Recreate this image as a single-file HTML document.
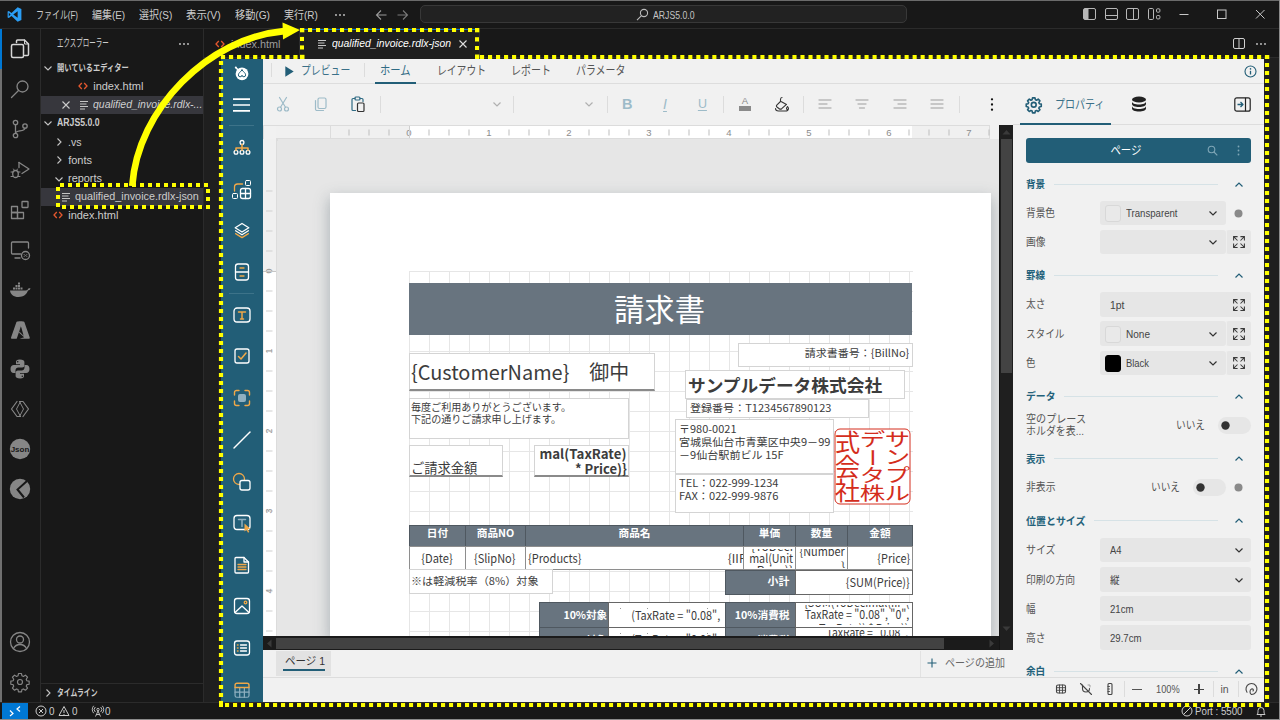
<!DOCTYPE html>
<html lang="ja"><head><meta charset="utf-8"><title>ARJS Designer in VS Code</title>
<style>
html,body{margin:0;padding:0;background:#181818;}
body{width:1280px;height:720px;overflow:hidden;position:relative;font-family:"Liberation Sans","Noto Sans CJK JP",sans-serif;}
#root{position:absolute;left:0;top:0;width:1280px;height:720px;overflow:hidden;}
#root div,#root svg,#root span.t{position:absolute;}
#root svg{overflow:visible;}
span.t{white-space:nowrap;line-height:1;transform-origin:0 50%;}
</style></head><body><div id="root">
<div style="left:0px;top:0px;width:1280px;height:720px;background:#181818;"></div>
<div style="left:0px;top:0px;width:1280px;height:1px;background:#6b6b6b;"></div>
<div style="left:0px;top:28px;width:1280px;height:1px;background:#2b2b2b;"></div>
<svg style="left:7px;top:7px" width="15" height="15" viewBox="0 0 100 100"><path d="M71 2 30 40 12 26 4 30v40l8 4 18-14 41 38 25-11V13zM71 28v44L42 50zM12 62V38l12 12z" fill="#2a9df4"/></svg>
<span class="t" style="top:9.70px;font-size:11px;color:#cccccc;left:36.20px;transform:scaleX(0.724);">ファイル(F)</span>
<span class="t" style="top:9.70px;font-size:11px;color:#cccccc;left:91.80px;transform:scaleX(0.905);">編集(E)</span>
<span class="t" style="top:9.70px;font-size:11px;color:#cccccc;left:139.20px;transform:scaleX(0.908);">選択(S)</span>
<span class="t" style="top:9.70px;font-size:11px;color:#cccccc;left:186.20px;transform:scaleX(0.944);">表示(V)</span>
<span class="t" style="top:9.70px;font-size:11px;color:#cccccc;left:234.50px;transform:scaleX(0.924);">移動(G)</span>
<span class="t" style="top:9.70px;font-size:11px;color:#cccccc;left:283.80px;transform:scaleX(0.904);">実行(R)</span>
<svg style="left:333px;top:12px" width="14" height="6" viewBox="0 0 14 6"><circle cx="3" cy="3" r="0.9" fill="#ccc"/><circle cx="7" cy="3" r="0.9" fill="#ccc"/><circle cx="11" cy="3" r="0.9" fill="#ccc"/></svg>
<svg style="left:375px;top:9px" width="34" height="12" viewBox="0 0 34 12" fill="none" stroke="#9a9a9a" stroke-width="1.1"><path d="M11.5 6H1.5M6 1.5 1.5 6 6 10.5"/><path d="M22.5 6h10M28 1.5 32.500 6 28 10.500" stroke="#7a7a7a"/></svg>
<div style="left:420px;top:5px;width:487px;height:18px;background:#222222;border:1px solid #383838;border-radius:5px;box-sizing:border-box;"></div>
<svg style="left:636px;top:8px" width="13" height="13" viewBox="0 0 13 13" fill="none" stroke="#bbb" stroke-width="1.1"><circle cx="8" cy="5" r="3.6"/><path d="M5.500 7.700 1 12.200"/></svg>
<span class="t" style="top:9.95px;font-size:10.5px;color:#c4c4c4;left:652.50px;transform:scaleX(0.827);">ARJS5.0.0</span>
<svg style="left:1083px;top:8px" width="13" height="12" viewBox="0 0 13 12" fill="none" stroke="#b8b8b8" stroke-width="1"><rect x="0.5" y="0.500" width="12" height="11" rx="1.5"/><rect x="1" y="1" width="4.500" height="10" fill="#b8b8b8" stroke="none"/></svg>
<svg style="left:1104.5px;top:8px" width="13" height="12" viewBox="0 0 13 12" fill="none" stroke="#b8b8b8" stroke-width="1"><rect x="0.5" y="0.500" width="12" height="11" rx="1.5"/><path d="M0.5 7.500h12"/></svg>
<svg style="left:1126px;top:8px" width="13" height="12" viewBox="0 0 13 12" fill="none" stroke="#b8b8b8" stroke-width="1"><rect x="0.5" y="0.500" width="12" height="11" rx="1.5"/><path d="M7.500 0.500v11"/></svg>
<svg style="left:1148px;top:8px" width="13" height="12" viewBox="0 0 13 12" fill="none" stroke="#b8b8b8" stroke-width="1"><rect x="0.5" y="0.500" width="5" height="11" rx="1.2"/><rect x="8.5" y="0.800" width="3.400" height="3.400" rx="1"/><rect x="8.5" y="7.500" width="3.400" height="3.400" rx="1"/></svg>
<svg style="left:1179px;top:8px" width="92" height="12" viewBox="0 0 92 12" fill="none" stroke="#c8c8c8" stroke-width="1"><path d="M0.500 6.500h9"/><rect x="38.500" y="2" width="8.500" height="8.500"/><path d="M77 2l8.500 8.500M85.500 2 77 10.500"/></svg>
<div style="left:40px;top:29px;width:1px;height:673px;background:#2b2b2b;"></div>
<div style="left:0px;top:29px;width:1.5px;height:673px;background:#707070;"></div>
<div style="left:0px;top:29px;width:2px;height:40px;background:#0078d4;"></div>
<svg style="left:8px;top:37px" width="24" height="24" viewBox="0 0 24 24" fill="none" stroke="#d7d7d7" stroke-width="1.5" stroke-linejoin="round" stroke-linecap="round"><path d="M8.500 5.500V4a1 1 0 0 1 1-1h7l4 4v10.500a1 1 0 0 1-1 1h-3"/><path d="M16.500 3v4h4" stroke-width="1"/><rect x="3.500" y="7.500" width="12" height="13" rx="1.500"/></svg>
<svg style="left:8px;top:77px" width="24" height="24" viewBox="0 0 24 24" fill="none" stroke="#868686" stroke-width="1.3" stroke-linejoin="round" stroke-linecap="round"><circle cx="14.500" cy="9.500" r="5.500"/><path d="M10.500 13.500 3.500 20.500"/></svg>
<svg style="left:8px;top:117px" width="24" height="24" viewBox="0 0 24 24" fill="none" stroke="#868686" stroke-width="1.3" stroke-linejoin="round" stroke-linecap="round"><circle cx="7.500" cy="5.500" r="2.200"/><circle cx="7.500" cy="18.500" r="2.200"/><circle cx="17" cy="9" r="2.200"/><path d="M7.500 7.700v8.600M17 11.200c0 3.500-9.500 2-9.500 5"/></svg>
<svg style="left:8px;top:157px" width="24" height="24" viewBox="0 0 24 24" fill="none" stroke="#868686" stroke-width="1.3" stroke-linejoin="round" stroke-linecap="round"><path d="M11 5.500 21 12l-7 4.500"/><path d="M11 5.500v5"/><ellipse cx="7.500" cy="17" rx="2.800" ry="3.500"/><path d="M3 15h2M10 15h2M3 19.500h2M10 19.500h2M5.500 12l1 1.500M9.500 12l-1 1.500" stroke-width="1"/></svg>
<svg style="left:8px;top:198px" width="24" height="24" viewBox="0 0 24 24" fill="none" stroke="#868686" stroke-width="1.3" stroke-linejoin="round" stroke-linecap="round"><rect x="3.500" y="8.500" width="6" height="6"/><rect x="3.500" y="14.500" width="6" height="6"/><rect x="9.500" y="14.500" width="6" height="6"/><rect x="14" y="3.500" width="6" height="6" rx="0.500"/></svg>
<svg style="left:8px;top:238px" width="24" height="24" viewBox="0 0 24 24" fill="none" stroke="#868686" stroke-width="1.3" stroke-linejoin="round" stroke-linecap="round"><path d="M20.500 10V5a1 1 0 0 0-1-1h-15a1 1 0 0 0-1 1v10a1 1 0 0 0 1 1h8"/><path d="M7 20h5"/><circle cx="17.500" cy="17.500" r="4"/><path d="M16 16.300l1.200 1.200-1.200 1.200M19 16.300l-1.200 1.200 1.200 1.200" stroke-width="0.8"/></svg>
<svg style="left:8px;top:278px" width="24" height="24" viewBox="0 0 24 24" fill="#868686"><path d="M2 12.500h15.500c1 0 1.800-.3 2.300-1 .3-1.300 1.500-1.600 2.700-1.200-.3 1.500-1.500 2.200-2.600 2.300-1.300 3.900-4.300 6.400-9.400 6.400-5 0-8-2.500-8.500-6.500z"/><path d="M5 9.500h2v2H5zM7.500 9.500h2v2h-2zM10 9.500h2v2h-2zM12.500 9.500h2v2h-2zM7.500 7h2v2h-2zM10 7h2v2h-2zM10 4.500h2v2h-2z"/></svg>
<svg style="left:8px;top:318px" width="24" height="24" viewBox="0 0 24 24" fill="#868686"><path d="M9.300 3.500h5.200L8.900 20.200a.9.900 0 0 1-.85.600H3.900a.9.900 0 0 1-.85-1.200L8.450 4.100a.9.900 0 0 1 .85-.600z"/><path d="M10.400 3.500h5.100a.9.900 0 0 1 .85.600l5.400 15.500a.9.900 0 0 1-.85 1.200h-9.300l4.500-1.500-5-4.500 2-5.300-1.500 4.300 4 4-2.200-8z"/></svg>
<svg style="left:8px;top:357px" width="24" height="24" viewBox="0 0 24 24" fill="#868686"><path d="M11.800 2.500c-3 0-3.800 1.300-3.800 2.500v2.300h4v.8H5.800C4 8.100 2.500 9.500 2.500 12s1.300 3.900 3 3.900H7.500v-2.600c0-1.500 1.300-2.800 2.800-2.800h3.900c1.200 0 2.200-1 2.200-2.300V5c0-1.300-1.400-2.500-4.600-2.500zM9.700 4a.8.8 0 1 1 0 1.600.8.800 0 0 1 0-1.600z"/><path d="M12.200 21.500c3 0 3.800-1.300 3.800-2.500v-2.300h-4v-.8h6.200c1.800 0 3.300-1.400 3.300-3.900s-1.300-3.900-3-3.900h-2v2.600c0 1.500-1.300 2.800-2.800 2.800H9.800c-1.200 0-2.200 1-2.200 2.300V19c0 1.300 1.400 2.500 4.600 2.500zM14.300 20a.8.800 0 1 1 0-1.600.8.800 0 0 1 0 1.600z"/></svg>
<svg style="left:8px;top:397px" width="24" height="24" viewBox="0 0 24 24" fill="none" stroke="#868686" stroke-width="1.2" stroke-linejoin="round" stroke-linecap="round"><path d="M9 4.500 3.500 12 9 19.500h3.500M15 19.500 20.500 12 15 4.500h-3.500"/><path d="M12.500 4.500 8.500 12l4 7.500M11.500 19.500 15.500 12l-4-7.500" stroke-width="1"/></svg>
<svg style="left:8px;top:437px" width="24" height="24" viewBox="0 0 24 24"><circle cx="12" cy="12" r="10.200" fill="#868686"/><text x="12" y="15" font-size="8" font-weight="700" text-anchor="middle" fill="#181818" font-family="Liberation Sans,sans-serif">Json</text></svg>
<svg style="left:8px;top:477px" width="24" height="24" viewBox="0 0 24 24"><circle cx="12" cy="12" r="10.200" fill="#868686"/><path d="M19 4 9.500 12.500 16 20.500" fill="none" stroke="#181818" stroke-width="2"/></svg>
<svg style="left:8px;top:630px" width="24" height="24" viewBox="0 0 24 24" fill="none" stroke="#868686" stroke-width="1.3" stroke-linejoin="round" stroke-linecap="round"><circle cx="12" cy="12" r="9.500"/><circle cx="12" cy="9.500" r="3.500"/><path d="M5.500 18.500c1.500-3 4-4 6.500-4s5 1 6.500 4"/></svg>
<svg style="left:8px;top:670px" width="24" height="24" viewBox="0 0 24 24" fill="none" stroke="#868686" stroke-width="1.3" stroke-linejoin="round" stroke-linecap="round"><g transform="translate(1.300,1.300) scale(0.890)"><circle cx="12" cy="12" r="2.800"/><path d="M10.300 2.500h3.400l.5 2.600 1.700.7 2.200-1.500 2.400 2.400-1.500 2.200.7 1.700 2.600.5v3.400l-2.600.5-.7 1.700 1.500 2.200-2.400 2.400-2.200-1.500-1.700.7-.5 2.600h-3.400l-.5-2.600-1.700-.7-2.200 1.500-2.400-2.400 1.500-2.200-.7-1.700-2.600-.5v-3.400l2.600-.5.700-1.700-1.500-2.200 2.400-2.400 2.200 1.500 1.700-.7z"/></svg>
<div style="left:203px;top:29px;width:1px;height:673px;background:#2b2b2b;"></div>
<span class="t" style="top:38.30px;font-size:11px;color:#cccccc;left:57.00px;transform:scaleX(0.591);">エクスプローラー</span>
<svg style="left:177px;top:41px" width="14" height="6" viewBox="0 0 14 6"><circle cx="3" cy="3" r="0.9" fill="#ccc"/><circle cx="7" cy="3" r="0.9" fill="#ccc"/><circle cx="11" cy="3" r="0.9" fill="#ccc"/></svg>
<svg style="left:43px;top:62.5px" width="10" height="10" viewBox="0 0 10 10" fill="none" stroke="#c5c5c5" stroke-width="1.1"><path d="M1.500 3.500 5 7l3.500-3.500"/></svg>
<span class="t" style="top:62.75px;font-size:9.5px;color:#cccccc;font-weight:700;left:57.00px;transform:scaleX(0.763);">開いているエディター</span>
<svg style="left:78px;top:82.2px" width="10" height="8" viewBox="0 0 10 8" fill="none" stroke="#e4572e" stroke-width="1.300"><path d="M3.800 1 1 4l2.800 3M6.200 1 9 4 6.200 7"/></svg>
<span class="t" style="top:80.50px;font-size:11px;color:#cccccc;left:93.20px;">index.html</span>
<div style="left:41px;top:96px;width:162px;height:18px;background:#37373d;"></div>
<svg style="left:62px;top:101px" width="8" height="8" viewBox="0 0 8 8" stroke="#ccc" stroke-width="1.100"><path d="M0.500 0.500l7 7M7.500 0.500l-7 7"/></svg>
<svg style="left:79px;top:100px" width="10" height="10" viewBox="0 0 10 10" stroke="#c5c5c5" stroke-width="1.100"><path d="M1 1.500h8M1 4h6.500M1 6.500h8M1 9h5"/></svg>
<span class="t" style="top:99.30px;font-size:11px;color:#d0d0d0;font-style:italic;left:93.20px;transform:scaleX(0.951);">qualified_invoice.rdlx-...</span>
<svg style="left:43px;top:118.2px" width="10" height="10" viewBox="0 0 10 10" fill="none" stroke="#c5c5c5" stroke-width="1.1"><path d="M1.500 3.500 5 7l3.500-3.500"/></svg>
<span class="t" style="top:118.20px;font-size:10px;color:#cccccc;font-weight:700;left:57.00px;transform:scaleX(0.869);">ARJS5.0.0</span>
<svg style="left:54px;top:137px" width="10" height="10" viewBox="0 0 10 10" fill="none" stroke="#c5c5c5" stroke-width="1.1"><path d="M3.500 1.500 7 5 3.500 8.500"/></svg>
<span class="t" style="top:136.50px;font-size:11px;color:#cccccc;left:68.20px;transform:scaleX(0.960);">.vs</span>
<svg style="left:54px;top:155px" width="10" height="10" viewBox="0 0 10 10" fill="none" stroke="#c5c5c5" stroke-width="1.1"><path d="M3.500 1.500 7 5 3.500 8.500"/></svg>
<span class="t" style="top:154.50px;font-size:11px;color:#cccccc;left:68.20px;">fonts</span>
<svg style="left:54px;top:173.5px" width="10" height="10" viewBox="0 0 10 10" fill="none" stroke="#c5c5c5" stroke-width="1.1"><path d="M1.500 3.500 5 7l3.500-3.500"/></svg>
<span class="t" style="top:173.00px;font-size:11px;color:#cccccc;left:68.20px;transform:scaleX(0.993);">reports</span>
<div style="left:41px;top:188px;width:162px;height:18px;background:#37373d;"></div>
<svg style="left:60.5px;top:192px" width="10" height="10" viewBox="0 0 10 10" stroke="#c5c5c5" stroke-width="1.100"><path d="M1 1.500h8M1 4h6.500M1 6.500h8M1 9h5"/></svg>
<span class="t" style="top:191.30px;font-size:11px;color:#cccccc;left:75.00px;transform:scaleX(0.983);">qualified_invoice.rdlx-json</span>
<svg style="left:53px;top:211px" width="10" height="8" viewBox="0 0 10 8" fill="none" stroke="#e4572e" stroke-width="1.300"><path d="M3.800 1 1 4l2.800 3M6.200 1 9 4 6.200 7"/></svg>
<span class="t" style="top:209.50px;font-size:11px;color:#cccccc;left:68.20px;">index.html</span>
<div style="left:41px;top:683px;width:162px;height:1px;background:#2b2b2b;"></div>
<svg style="left:43px;top:688px" width="10" height="10" viewBox="0 0 10 10" fill="none" stroke="#c5c5c5" stroke-width="1.1"><path d="M3.500 1.500 7 5 3.500 8.500"/></svg>
<span class="t" style="top:688.25px;font-size:9.5px;color:#cccccc;font-weight:700;left:57.00px;transform:scaleX(0.719);">タイムライン</span>
<div style="left:204px;top:58px;width:1075px;height:644px;background:#1f1f1f;"></div>
<div style="left:204px;top:57px;width:1076px;height:1px;background:#2b2b2b;"></div>
<div style="left:300px;top:29px;width:179px;height:29px;background:#1f1f1f;border-top:1px solid #0078d4;box-sizing:border-box;"></div>
<div style="left:299px;top:29px;width:1px;height:28px;background:#2b2b2b;"></div>
<div style="left:479px;top:29px;width:1px;height:28px;background:#2b2b2b;"></div>
<svg style="left:215px;top:40px" width="10" height="8" viewBox="0 0 10 8" fill="none" stroke="#e4572e" stroke-width="1.300"><path d="M3.800 1 1 4l2.800 3M6.200 1 9 4 6.200 7"/></svg>
<span class="t" style="top:38.50px;font-size:11px;color:#9d9d9d;left:231.00px;transform:scaleX(0.987);">index.html</span>
<svg style="left:316.8px;top:39px" width="10" height="10" viewBox="0 0 10 10" stroke="#c5c5c5" stroke-width="1.100"><path d="M1 1.500h8M1 4h6.500M1 6.500h8M1 9h5"/></svg>
<span class="t" style="top:38.30px;font-size:11px;color:#ffffff;font-style:italic;left:331.80px;transform:scaleX(0.945);">qualified_invoice.rdlx-json</span>
<svg style="left:459px;top:40px" width="8" height="8" viewBox="0 0 8 8" stroke="#e0e0e0" stroke-width="1.100"><path d="M0.500 0.500l7 7M7.500 0.500l-7 7"/></svg>
<svg style="left:1233px;top:38px" width="13" height="12" viewBox="0 0 13 12" fill="none" stroke="#d0d0d0" stroke-width="1"><rect x="0.5" y="0.500" width="11" height="10" rx="1.5"/><path d="M6 0.500v10"/></svg>
<svg style="left:1254px;top:41px" width="14" height="6" viewBox="0 0 14 6"><circle cx="3" cy="3" r="0.9" fill="#ccc"/><circle cx="7" cy="3" r="0.9" fill="#ccc"/><circle cx="11" cy="3" r="0.9" fill="#ccc"/></svg>
<div style="left:0px;top:702px;width:1280px;height:1px;background:#2b2b2b;"></div>
<div style="left:2px;top:703px;width:26px;height:16px;background:#0078d4;"></div>
<svg style="left:9px;top:706px" width="12" height="10" viewBox="0 0 12 10" fill="none" stroke="#fff" stroke-width="1.200"><path d="M1 4.500 4 7.500 1 10M11 0.500 8 3l3 2.500" /></svg>
<svg style="left:35px;top:705px" width="12" height="12" viewBox="0 0 12 12" fill="none" stroke="#ccc" stroke-width="1"><circle cx="6" cy="6" r="5"/><path d="M4 4l4 4M8 4 4 8"/></svg>
<span class="t" style="top:705.50px;font-size:11px;color:#cccccc;left:49.00px;transform:scaleX(0.898);">0</span>
<svg style="left:58px;top:705px" width="12" height="12" viewBox="0 0 12 12" fill="none" stroke="#ccc" stroke-width="1"><path d="M6 1.500 11 10.500H1z"/><path d="M6 5v3M6 9v.8"/></svg>
<span class="t" style="top:705.50px;font-size:11px;color:#cccccc;left:72.00px;transform:scaleX(0.898);">0</span>
<svg style="left:92px;top:705px" width="12" height="12" viewBox="0 0 12 12" fill="none" stroke="#ccc" stroke-width="0.900"><circle cx="6" cy="4.500" r="1.200"/><path d="M6 6 3.500 11.500M6 6l2.500 5.500M4.300 9.500h3.400M3.300 2a3.500 3.500 0 0 0 0 5M8.700 2a3.500 3.500 0 0 1 0 5M1.700 0.800a5.500 5.500 0 0 0 0 7.400M10.300 0.800a5.500 5.500 0 0 1 0 7.400"/></svg>
<span class="t" style="top:705.50px;font-size:11px;color:#cccccc;left:105.00px;transform:scaleX(0.898);">0</span>
<svg style="left:1181px;top:705px" width="12" height="12" viewBox="0 0 12 12" fill="none" stroke="#ccc" stroke-width="1"><circle cx="6" cy="6" r="5"/><path d="M2.500 9.500l7-7"/></svg>
<span class="t" style="top:705.75px;font-size:10.5px;color:#cccccc;left:1195.00px;transform:scaleX(0.925);">Port : 5500</span>
<svg style="left:1255px;top:705px" width="12" height="12" viewBox="0 0 12 12" fill="none" stroke="#ccc" stroke-width="1"><path d="M2 9.500c1-1 1-2 1-4a3 3 0 0 1 6 0c0 2 0 3 1 4zM5 11h2"/></svg>
<div style="left:0px;top:719px;width:1280px;height:1px;background:#8c8c8c;"></div>
<div style="left:1279px;top:0px;width:1px;height:720px;background:#8c8c8c;"></div>
<div style="left:221px;top:59px;width:1043px;height:643px;background:#f1f1f1;"></div>
<div style="left:221px;top:59px;width:42px;height:643px;background:#225e77;"></div>
<div style="left:263px;top:83px;width:1001px;height:1px;background:#dddddd;"></div>
<div style="left:271px;top:63px;width:1px;height:14px;background:#dcdcdc;"></div>
<div style="left:364px;top:63px;width:1px;height:14px;background:#dcdcdc;"></div>
<svg style="left:285px;top:66px" width="9" height="11" viewBox="0 0 9 11"><path d="M0.300 0.300 8.700 5.500 0.300 10.700z" fill="#225e77"/></svg>
<span class="t" style="top:65.30px;font-size:12px;color:#3a7088;left:300.70px;transform:scaleX(0.821);">プレビュー</span>
<span class="t" style="top:65.30px;font-size:12px;color:#2f6b84;left:380.00px;transform:scaleX(0.856);">ホーム</span>
<div style="left:375px;top:82px;width:41px;height:2px;background:#225e77;"></div>
<span class="t" style="top:65.30px;font-size:12px;color:#555555;left:436.60px;transform:scaleX(0.816);">レイアウト</span>
<span class="t" style="top:65.30px;font-size:12px;color:#555555;left:511.00px;transform:scaleX(0.833);">レポート</span>
<span class="t" style="top:65.30px;font-size:12px;color:#555555;left:575.60px;transform:scaleX(0.828);">パラメータ</span>
<svg style="left:1244px;top:65px" width="13" height="13" viewBox="0 0 13 13" fill="none" stroke="#225e77" stroke-width="1.100"><circle cx="6.500" cy="6.500" r="5.500"/><path d="M6.500 5.800v3.700" stroke-width="1.300"/><circle cx="6.500" cy="3.900" r="0.800" fill="#225e77" stroke="none"/></svg>
<svg style="left:274.0px;top:95.3px" width="18" height="18" viewBox="0 0 18 18" fill="none" stroke="#9dbbc8" stroke-width="1.2" stroke-linecap="round" stroke-linejoin="round"><circle cx="5.500" cy="14" r="2"/><circle cx="12.500" cy="14" r="2"/><path d="M6.500 12.300 12.500 2.500M11.500 12.300 5.500 2.500"/></svg>
<svg style="left:312.0px;top:95.3px" width="18" height="18" viewBox="0 0 18 18" fill="none" stroke="#9dbbc8" stroke-width="1.2" stroke-linecap="round" stroke-linejoin="round"><rect x="6" y="3" width="8" height="10.500" rx="1.500"/><path d="M11.500 15.500h-6.500a1.500 1.500 0 0 1-1.500-1.500v-8.500"/></svg>
<svg style="left:349.0px;top:95.3px" width="18" height="18" viewBox="0 0 18 18" fill="none" stroke="#9dbbc8" stroke-width="1.2" stroke-linecap="round" stroke-linejoin="round"><path d="M6.500 15.500h-2.500a1 1 0 0 1-1-1v-10a1 1 0 0 1 1-1h2M11 3.500h2a1 1 0 0 1 1 1v2" stroke="#2f6b84"/><rect x="6" y="2" width="5" height="3" rx="1" stroke="#2f6b84"/><rect x="8.500" y="8" width="6.500" height="8.500" rx="1" stroke="#333"/></svg>
<div style="left:379.5px;top:96px;width:1px;height:17px;background:#dcdcdc;"></div>
<div style="left:513px;top:96px;width:1px;height:17px;background:#dcdcdc;"></div>
<div style="left:606.5px;top:96px;width:1px;height:17px;background:#dcdcdc;"></div>
<div style="left:723.4px;top:96px;width:1px;height:17px;background:#dcdcdc;"></div>
<div style="left:803.4px;top:96px;width:1px;height:17px;background:#dcdcdc;"></div>
<div style="left:958.6px;top:96px;width:1px;height:17px;background:#dcdcdc;"></div>
<svg style="left:491.6px;top:101.0px" width="10" height="7" viewBox="0 0 10 7" fill="none" stroke="#b0b0b0" stroke-width="1.200"><path d="M1.500 1.500 5 5l3.500-3.500"/></svg>
<svg style="left:584px;top:101.0px" width="10" height="7" viewBox="0 0 10 7" fill="none" stroke="#b0b0b0" stroke-width="1.200"><path d="M1.500 1.500 5 5l3.500-3.500"/></svg>
<span class="t" style="top:97.05px;font-size:14.5px;color:#9dbbc8;font-weight:700;transform-origin:50% 50%;left:621.96px;">B</span>
<span class="t" style="top:97.30px;font-size:14px;color:#9dbbc8;font-style:italic;transform-origin:50% 50%;left:663.05px;text-decoration:underline;text-underline-offset:2px;">I</span>
<span class="t" style="top:97.75px;font-size:12.5px;color:#9dbbc8;transform-origin:50% 50%;left:697.88px;text-decoration:underline;text-underline-offset:2px;">U</span>
<span class="t" style="top:96.05px;font-size:9.5px;color:#8a8a8a;transform-origin:50% 50%;left:741.83px;">A</span>
<div style="left:739px;top:106px;width:12px;height:4.5px;background:#8a8a8a;"></div>
<svg style="left:773.0px;top:95.3px" width="18" height="18" viewBox="0 0 18 18" fill="none" stroke="#333" stroke-width="1.1" stroke-linecap="round" stroke-linejoin="round"><path d="M9 2.500c-1 0-1.500 1-1.500 2v2l-3.500 3.300c-.8.800-.8 1.500 0 2.200l2.200 1.700c.8.600 1.700.600 2.500 0l4.800-4.300-5-2.700"/><path d="M14.500 11.500c.7 1 1 1.500 1 2a1 1 0 0 1-2 0c0-.5.300-1 1-2z"/><path d="M2.500 13.500c0 2 1.500 2.500 3 2.500h7c1.500 0 2.500-.8 2.500-1.500" /></svg>
<svg style="left:815.7px;top:95.3px" width="18" height="18" viewBox="0 0 18 18" fill="none" stroke="#b9b9b9" stroke-width="1.3" stroke-linecap="round" stroke-linejoin="round"><path d="M3 5h12M3 9h8M3 13h12"/></svg>
<svg style="left:853.0px;top:95.3px" width="18" height="18" viewBox="0 0 18 18" fill="none" stroke="#b9b9b9" stroke-width="1.3" stroke-linecap="round" stroke-linejoin="round"><path d="M3 5h12M5 9h8M6.500 13h5"/></svg>
<svg style="left:890.5px;top:95.3px" width="18" height="18" viewBox="0 0 18 18" fill="none" stroke="#b9b9b9" stroke-width="1.3" stroke-linecap="round" stroke-linejoin="round"><path d="M3 5h12M7 9h8M3 13h12"/></svg>
<svg style="left:928.3px;top:95.3px" width="18" height="18" viewBox="0 0 18 18" fill="none" stroke="#b9b9b9" stroke-width="1.3" stroke-linecap="round" stroke-linejoin="round"><path d="M3 5h12M3 9h12M3 13h12"/></svg>
<svg style="left:990px;top:97px" width="4" height="15" viewBox="0 0 4 15" fill="#111"><circle cx="2" cy="2.300" r="1.150"/><circle cx="2" cy="7.500" r="1.150"/><circle cx="2" cy="12.700" r="1.150"/></svg>
<div style="left:263px;top:125px;width:736px;height:511px;background:#e6e6e6;"></div>
<div style="left:330px;top:193px;width:661px;height:443px;background:#ffffff;box-shadow:0 6px 14px 1px rgba(70,90,100,0.36);"></div>
<div style="left:263px;top:125px;width:736px;height:14px;background:#f1f1f1;"></div>
<div style="left:263px;top:125px;width:13px;height:14px;background:#f1f1f1;border:1px solid #dcdcdc;box-sizing:content-box;"></div>
<div style="left:276px;top:125px;width:714px;height:14px;background:#f0f0f0;border:1px solid #dcdcdc;border-left:0;box-sizing:border-box;"></div>
<div style="left:409px;top:126px;width:503px;height:12px;background:#ffffff;"></div>
<div style="left:330px;top:126px;width:1px;height:12px;background:#dcdcdc;"></div>
<svg style="left:0;top:125.500px" width="999" height="13" viewBox="0 0 999 13"><rect x="348.5" y="3.500" width="1" height="6" fill="#bdbdbd"/><rect x="368.5" y="3.500" width="1" height="6" fill="#bdbdbd"/><rect x="388.5" y="3.500" width="1" height="6" fill="#bdbdbd"/><text x="409" y="9.600" font-size="9.500" text-anchor="middle" fill="#8c8c8c" font-family="Liberation Sans,sans-serif">0</text><rect x="428.5" y="3.500" width="1" height="6" fill="#bdbdbd"/><rect x="448.5" y="3.500" width="1" height="6" fill="#bdbdbd"/><rect x="468.5" y="3.500" width="1" height="6" fill="#bdbdbd"/><text x="489" y="9.600" font-size="9.500" text-anchor="middle" fill="#8c8c8c" font-family="Liberation Sans,sans-serif">1</text><rect x="508.5" y="3.500" width="1" height="6" fill="#bdbdbd"/><rect x="528.5" y="3.500" width="1" height="6" fill="#bdbdbd"/><rect x="548.5" y="3.500" width="1" height="6" fill="#bdbdbd"/><text x="569" y="9.600" font-size="9.500" text-anchor="middle" fill="#8c8c8c" font-family="Liberation Sans,sans-serif">2</text><rect x="588.5" y="3.500" width="1" height="6" fill="#bdbdbd"/><rect x="608.5" y="3.500" width="1" height="6" fill="#bdbdbd"/><rect x="628.5" y="3.500" width="1" height="6" fill="#bdbdbd"/><text x="649" y="9.600" font-size="9.500" text-anchor="middle" fill="#8c8c8c" font-family="Liberation Sans,sans-serif">3</text><rect x="668.5" y="3.500" width="1" height="6" fill="#bdbdbd"/><rect x="688.5" y="3.500" width="1" height="6" fill="#bdbdbd"/><rect x="708.5" y="3.500" width="1" height="6" fill="#bdbdbd"/><text x="729" y="9.600" font-size="9.500" text-anchor="middle" fill="#8c8c8c" font-family="Liberation Sans,sans-serif">4</text><rect x="748.5" y="3.500" width="1" height="6" fill="#bdbdbd"/><rect x="768.5" y="3.500" width="1" height="6" fill="#bdbdbd"/><rect x="788.5" y="3.500" width="1" height="6" fill="#bdbdbd"/><text x="809" y="9.600" font-size="9.500" text-anchor="middle" fill="#8c8c8c" font-family="Liberation Sans,sans-serif">5</text><rect x="828.5" y="3.500" width="1" height="6" fill="#bdbdbd"/><rect x="848.5" y="3.500" width="1" height="6" fill="#bdbdbd"/><rect x="868.5" y="3.500" width="1" height="6" fill="#bdbdbd"/><text x="889" y="9.600" font-size="9.500" text-anchor="middle" fill="#8c8c8c" font-family="Liberation Sans,sans-serif">6</text><rect x="908.5" y="3.500" width="1" height="6" fill="#bdbdbd"/><rect x="928.5" y="3.500" width="1" height="6" fill="#bdbdbd"/><rect x="948.5" y="3.500" width="1" height="6" fill="#bdbdbd"/><text x="969" y="9.600" font-size="9.500" text-anchor="middle" fill="#8c8c8c" font-family="Liberation Sans,sans-serif">7</text><rect x="988.5" y="3.500" width="1" height="6" fill="#bdbdbd"/></svg>
<div style="left:263px;top:139px;width:14px;height:497px;background:#f0f0f0;border-right:1px solid #dcdcdc;box-sizing:border-box;"></div>
<div style="left:264px;top:271px;width:12px;height:365px;background:#ffffff;"></div>
<svg style="left:263px;top:0" width="13" height="636" viewBox="0 0 13 636"><rect x="3" y="190.5" width="6.500" height="1" fill="#d0d0d0"/><rect x="3" y="210.5" width="6.500" height="1" fill="#d0d0d0"/><rect x="3" y="230.5" width="6.500" height="1" fill="#d0d0d0"/><rect x="3" y="250.5" width="6.500" height="1" fill="#d0d0d0"/><rect x="3" y="270.5" width="6.500" height="1" fill="#c4c4c4"/><text transform="translate(9.300,271) rotate(-90)" font-size="9" text-anchor="middle" fill="#9a9a9a" font-family="Liberation Sans,sans-serif">0</text><rect x="3" y="290.5" width="6.500" height="1" fill="#d0d0d0"/><rect x="3" y="310.5" width="6.500" height="1" fill="#d0d0d0"/><rect x="3" y="330.5" width="6.500" height="1" fill="#d0d0d0"/><rect x="3" y="350.5" width="6.500" height="1" fill="#c4c4c4"/><text transform="translate(9.300,351) rotate(-90)" font-size="9" text-anchor="middle" fill="#9a9a9a" font-family="Liberation Sans,sans-serif">1</text><rect x="3" y="370.5" width="6.500" height="1" fill="#d0d0d0"/><rect x="3" y="390.5" width="6.500" height="1" fill="#d0d0d0"/><rect x="3" y="410.5" width="6.500" height="1" fill="#d0d0d0"/><rect x="3" y="430.5" width="6.500" height="1" fill="#c4c4c4"/><text transform="translate(9.300,431) rotate(-90)" font-size="9" text-anchor="middle" fill="#9a9a9a" font-family="Liberation Sans,sans-serif">2</text><rect x="3" y="450.5" width="6.500" height="1" fill="#d0d0d0"/><rect x="3" y="470.5" width="6.500" height="1" fill="#d0d0d0"/><rect x="3" y="490.5" width="6.500" height="1" fill="#d0d0d0"/><rect x="3" y="510.5" width="6.500" height="1" fill="#c4c4c4"/><text transform="translate(9.300,511) rotate(-90)" font-size="9" text-anchor="middle" fill="#9a9a9a" font-family="Liberation Sans,sans-serif">3</text><rect x="3" y="530.5" width="6.500" height="1" fill="#d0d0d0"/><rect x="3" y="550.5" width="6.500" height="1" fill="#d0d0d0"/><rect x="3" y="570.5" width="6.500" height="1" fill="#d0d0d0"/><rect x="3" y="590.5" width="6.500" height="1" fill="#c4c4c4"/><text transform="translate(9.300,591) rotate(-90)" font-size="9" text-anchor="middle" fill="#9a9a9a" font-family="Liberation Sans,sans-serif">4</text><rect x="3" y="610.5" width="6.500" height="1" fill="#d0d0d0"/><rect x="3" y="630.5" width="6.500" height="1" fill="#d0d0d0"/></svg>
<div style="left:263px;top:270.5px;width:13px;height:1px;background:#c6c6c6;"></div>
<div style="left:408.5px;top:126px;width:1px;height:12px;background:#cfcfcf;"></div>
<div style="left:999px;top:125px;width:14.5px;height:525px;background:#1f1f1f;border-left:1px solid #151515;border-right:1px solid #151515;box-sizing:border-box;"></div>
<div style="left:1000.5px;top:139px;width:11.8px;height:233.8px;background:#434343;"></div>
<svg style="left:1002px;top:129px" width="9" height="6" viewBox="0 0 9 6"><path d="M0.500 5.500 4.500 1l4 4.500z" fill="#3a3a3a"/></svg>
<svg style="left:1002px;top:626px" width="9" height="6" viewBox="0 0 9 6"><path d="M0.500 0.500 4.500 5l4-4.500z" fill="#3a3a3a"/></svg>
<div style="left:263px;top:636px;width:736px;height:14px;background:#1b1b1b;"></div>
<div style="left:276px;top:638px;width:668px;height:11px;background:#424242;"></div>
<svg style="left:266px;top:639px" width="6" height="9" viewBox="0 0 6 9"><path d="M5.500 0.500 1 4.500l4.500 4z" fill="#3a3a3a"/></svg>
<svg style="left:989px;top:639px" width="6" height="9" viewBox="0 0 6 9"><path d="M0.500 0.500 5 4.500l-4.500 4z" fill="#3a3a3a"/></svg>
<div style="left:263px;top:650px;width:750px;height:27px;background:#f1f1f1;"></div>
<div style="left:276px;top:651px;width:55px;height:25px;background:#e2e2e2;"></div>
<span class="t" style="top:656.00px;font-size:11px;color:#333333;left:284.50px;transform:scaleX(0.953);">ページ 1</span>
<div style="left:283px;top:669px;width:42px;height:1.5px;background:#225e77;"></div>
<div style="left:263px;top:677px;width:1001px;height:1px;background:#dddddd;"></div>
<div style="left:920px;top:651px;width:1px;height:26px;background:#e2e2e2;"></div>
<div style="left:1013px;top:650px;width:1px;height:27px;background:#e2e2e2;"></div>
<svg style="left:927px;top:658px" width="10" height="10" viewBox="0 0 10 10" stroke="#225e77" stroke-width="1.100"><path d="M5 0.500v9M0.500 5h9"/></svg>
<span class="t" style="top:658.00px;font-size:11px;color:#666666;left:945.00px;transform:scaleX(0.912);">ページの追加</span>
<svg style="left:1053.7px;top:682.0px" width="14" height="14" viewBox="0 0 14 14" fill="none" stroke="#444" stroke-width="1.1" stroke-linecap="round" stroke-linejoin="round"><rect x="2.500" y="3" width="9" height="8" rx="1.500"/><path d="M5.500 3v8M8.500 3v8M2.500 5.700h9M2.500 8.300h9" stroke-width="0.900"/></svg>
<svg style="left:1079.0px;top:682.0px" width="14" height="14" viewBox="0 0 14 14" fill="none" stroke="#444" stroke-width="1.1" stroke-linecap="round" stroke-linejoin="round"><path d="M3.500 3v3.500a3.500 3.500 0 0 0 7 0" /><path d="M1.500 1.500l11 11"/><path d="M9 3h2v2" stroke="#999" stroke-width="0.900"/></svg>
<svg style="left:1103.3px;top:682.0px" width="14" height="14" viewBox="0 0 14 14" fill="none" stroke="#444" stroke-width="1.1" stroke-linecap="round" stroke-linejoin="round"><rect x="5" y="1.500" width="4" height="11" rx="1"/><path d="M5 4.500h1.500M5 7h1.500M5 9.500h1.500" stroke-width="0.900"/></svg>
<div style="left:1123.5px;top:681px;width:1px;height:16px;background:#dcdcdc;"></div>
<div style="left:1212.5px;top:681px;width:1px;height:16px;background:#dcdcdc;"></div>
<div style="left:1237.5px;top:681px;width:1px;height:16px;background:#dcdcdc;"></div>
<div style="left:1132px;top:688.5px;width:9.5px;height:1.2px;background:#555;"></div>
<span class="t" style="top:683.75px;font-size:10.5px;color:#555555;left:1156.00px;transform:scaleX(0.882);">100%</span>
<div style="left:1194px;top:688.5px;width:10px;height:1.1px;background:#444;"></div>
<div style="left:1198.45px;top:684px;width:1.1px;height:10px;background:#444;"></div>
<span class="t" style="top:683.75px;font-size:10.5px;color:#555555;transform-origin:50% 50%;left:1220.51px;">in</span>
<svg style="left:1243.8px;top:682.0px" width="14" height="14" viewBox="0 0 14 14" fill="none" stroke="#444" stroke-width="1.1" stroke-linecap="round" stroke-linejoin="round"><path d="M7.500 12.500a5.500 5.500 0 1 0-4.500-2.300"/><path d="M7.500 12.500c-2-1-2-4.500 0-5.500 1.500-.5 2.500 1 1.500 2"/></svg>
<svg style="left:230.5px;top:61.5px" width="22" height="22" viewBox="0 0 22 22" fill="none" stroke="#ffffff" stroke-width="1.300" stroke-linecap="round" stroke-linejoin="round"><circle cx="11" cy="11.800" r="6.400" fill="#ffffff" stroke="none"/><path d="M11 8c1.600 2 3.600 3.200 3.600 4.800a1.800 1.800 0 0 1-3.600.400 1.800 1.800 0 0 1-3.600-.400c0-1.600 2-2.800 3.600-4.800z" fill="#ffffff" stroke="#225e77" stroke-width="1"/><path d="M5 5.800 6.800 7.600" stroke-width="1.400"/><circle cx="4.800" cy="5.600" r="1" fill="#ffffff" stroke="none"/></svg>
<svg style="left:233px;top:98px" width="17" height="14" viewBox="0 0 17 14" stroke="#ffffff" stroke-width="1.700"><path d="M0 1.200h17M0 7h17M0 12.800h17"/></svg>
<div style="left:229px;top:125px;width:25px;height:1px;background:#3d7389;"></div>
<div style="left:229px;top:293px;width:25px;height:1px;background:#3d7389;"></div>
<svg style="left:230.5px;top:137.0px" width="22" height="22" viewBox="0 0 22 22" fill="none" stroke="#ffffff" stroke-width="1.300" stroke-linecap="round" stroke-linejoin="round"><circle cx="11" cy="5.400" r="1.900"/><circle cx="5" cy="15.300" r="1.900"/><circle cx="11" cy="15.300" r="1.900"/><circle cx="17" cy="15.300" r="1.900"/><path d="M11 7.500v3.500M5 13.200v-2.200h12v2.200M11 11v2.200" stroke="#f0a848" stroke-width="1.600"/></svg>
<svg style="left:230.5px;top:178.5px" width="22" height="22" viewBox="0 0 22 22" fill="none" stroke="#ffffff" stroke-width="1.300" stroke-linecap="round" stroke-linejoin="round"><rect x="9.500" y="9.500" width="10" height="10" rx="2"/><path d="M14.500 9.500v10M9.500 14.500h10"/><path d="M3.500 12v-4a3 3 0 0 1 3-3h5" stroke="#f0a848"/><rect x="14.500" y="1.500" width="5" height="5" rx="1" stroke-width="1"/><rect x="1.500" y="14.500" width="5" height="5" rx="1" stroke-width="1"/></svg>
<svg style="left:230.5px;top:219.0px" width="22" height="22" viewBox="0 0 22 22" fill="none" stroke="#ffffff" stroke-width="1.300" stroke-linecap="round" stroke-linejoin="round"><path d="M11 4.500 17.800 8.800 11 13 4.200 8.800z"/><path d="M4.600 11.800 11 15.800 17.400 11.800" /><path d="M4.600 14.600 11 18.600 17.400 14.600" stroke="#f0a848"/></svg>
<svg style="left:230.5px;top:261.0px" width="22" height="22" viewBox="0 0 22 22" fill="none" stroke="#ffffff" stroke-width="1.300" stroke-linecap="round" stroke-linejoin="round"><rect x="4.500" y="3" width="13" height="16" rx="2.500"/><path d="M4.500 11h13"/><path d="M9 7h4M9 15h4" stroke="#f0a848"/></svg>
<svg style="left:230.5px;top:304.0px" width="22" height="22" viewBox="0 0 22 22" fill="none" stroke="#ffffff" stroke-width="1.300" stroke-linecap="round" stroke-linejoin="round"><rect x="3" y="4" width="16" height="14" rx="3"/><path d="M7.500 8h7M11 8v7M9.500 15h3" stroke="#f0a848" stroke-width="1.500"/></svg>
<svg style="left:230.5px;top:345.0px" width="22" height="22" viewBox="0 0 22 22" fill="none" stroke="#ffffff" stroke-width="1.300" stroke-linecap="round" stroke-linejoin="round"><rect x="4" y="4" width="14" height="14" rx="2"/><path d="M7.500 11.500 10 14l5-6" stroke="#f0a848" stroke-width="1.500"/></svg>
<svg style="left:230.5px;top:387.0px" width="22" height="22" viewBox="0 0 22 22" fill="none" stroke="#ffffff" stroke-width="1.300" stroke-linecap="round" stroke-linejoin="round"><path d="M3.500 8v-2.500a2 2 0 0 1 2-2h2.500M14 3.500h2.500a2 2 0 0 1 2 2v2.500M18.500 14v2.500a2 2 0 0 1-2 2h-2.500M8 18.500h-2.500a2 2 0 0 1-2-2v-2.500" stroke="#f0a848" stroke-width="1.400"/><rect x="7" y="7" width="8" height="8" rx="2" fill="#8fb0c0" stroke="none"/></svg>
<svg style="left:230.5px;top:428.5px" width="22" height="22" viewBox="0 0 22 22" fill="none" stroke="#ffffff" stroke-width="1.300" stroke-linecap="round" stroke-linejoin="round"><path d="M3 19 19 3" stroke-width="1.400"/></svg>
<svg style="left:230.5px;top:470.5px" width="22" height="22" viewBox="0 0 22 22" fill="none" stroke="#ffffff" stroke-width="1.300" stroke-linecap="round" stroke-linejoin="round"><circle cx="8" cy="8" r="5.500" stroke="#f0a848"/><rect x="9" y="9.500" width="10" height="9.500" rx="2" fill="#225e77"/></svg>
<svg style="left:230.5px;top:512.0px" width="22" height="22" viewBox="0 0 22 22" fill="none" stroke="#ffffff" stroke-width="1.300" stroke-linecap="round" stroke-linejoin="round"><rect x="3" y="3.500" width="16" height="14" rx="3"/><path d="M7.500 7.500h7M11 7.500v7" stroke="#8fb0c0" stroke-width="1.500"/><path d="M13.500 11.500v8l2-1.800 1.500 3 1.300-.600-1.500-3h2.700z" fill="#f0a848" stroke="none"/></svg>
<svg style="left:230.5px;top:554.0px" width="22" height="22" viewBox="0 0 22 22" fill="none" stroke="#ffffff" stroke-width="1.300" stroke-linecap="round" stroke-linejoin="round"><path d="M5 3.500h8l4.500 4.500v10a1 1 0 0 1-1 1h-11.500a1 1 0 0 1-1-1v-13.500a1 1 0 0 1 1-1z"/><path d="M13 3.500v4.500h4.500"/><path d="M7 10.500h8M7 13h8M7 15.500h8" stroke="#f0a848"/></svg>
<svg style="left:230.5px;top:595.0px" width="22" height="22" viewBox="0 0 22 22" fill="none" stroke="#ffffff" stroke-width="1.300" stroke-linecap="round" stroke-linejoin="round"><rect x="3.500" y="3.500" width="15" height="15" rx="2.500"/><path d="M4 17.500 11 11l7 6.500"/><circle cx="14.500" cy="7.500" r="1.300" stroke="#f0a848"/></svg>
<svg style="left:230.5px;top:636.5px" width="22" height="22" viewBox="0 0 22 22" fill="none" stroke="#ffffff" stroke-width="1.300" stroke-linecap="round" stroke-linejoin="round"><rect x="3.500" y="4" width="15" height="14" rx="2.500"/><path d="M9.500 8h6M9.500 11h6M9.500 14h6"/><path d="M6.500 8h.500M6.500 11h.500M6.500 14h.500" stroke="#f0a848" stroke-width="1.600"/></svg>
<svg style="left:230.5px;top:678.5px" width="22" height="22" viewBox="0 0 22 22" fill="none" stroke="#ffffff" stroke-width="1.300" stroke-linecap="round" stroke-linejoin="round"><g transform="translate(0.800,0.600) scale(0.930)"><path d="M3.500 8.500v8.500a2 2 0 0 0 2 2h11a2 2 0 0 0 2-2v-8.500z" stroke="#8fb0c0"/><path d="M8.500 8.500v10.500M13.500 8.500v10.500M3.500 13.500h15" stroke="#8fb0c0"/><path d="M3.500 8.500v-2.500a2 2 0 0 1 2-2h11a2 2 0 0 1 2 2v2.500z" stroke="#f0a848" stroke-width="1.500"/></g></svg>
<div style="left:0;top:0;width:999px;height:636px;overflow:hidden;">
<div style="left:409px;top:271px;width:504px;height:365px;background-image:linear-gradient(90deg,#e6e6e6 1px,transparent 1px),linear-gradient(180deg,#e6e6e6 1px,transparent 1px);background-size:20px 20px;"></div>
<div style="left:409px;top:282.5px;width:503px;height:52.5px;background:#68747f;"></div>
<span class="t" style="top:292.04px;font-size:31px;color:#ffffff;font-family:'Noto Sans CJK JP','Liberation Sans',sans-serif;transform-origin:50% 50%;left:613.10px;transform:scaleX(0.978);">請求書</span>
<div style="left:409px;top:353px;width:246px;height:38px;background:#ffffff;border:1px solid #d4d4d4;box-sizing:border-box;border-bottom:2px solid #8a8a8a;"></div>
<span class="t" style="top:361.80px;font-size:20px;color:#3c3c3c;font-family:'Noto Sans CJK JP','Liberation Sans',sans-serif;left:411.00px;transform:scaleX(0.995);">{CustomerName}　御中</span>
<div style="left:409px;top:398px;width:220px;height:41px;background:#ffffff;border:1px solid #d4d4d4;box-sizing:border-box;"></div>
<span class="t" style="top:401.60px;font-size:10px;color:#3c3c3c;font-family:'Noto Sans CJK JP','Liberation Sans',sans-serif;left:411.00px;transform:scaleX(1.006);">毎度ご利用ありがとうございます。</span>
<span class="t" style="top:413.90px;font-size:10px;color:#3c3c3c;font-family:'Noto Sans CJK JP','Liberation Sans',sans-serif;left:411.00px;transform:scaleX(1.007);">下記の通りご請求申し上げます。</span>
<div style="left:409px;top:445px;width:94px;height:32px;background:#ffffff;border:1px solid #d4d4d4;box-sizing:border-box;border-bottom:2px solid #8a8a8a;"></div>
<span class="t" style="top:460.74px;font-size:13.33px;color:#3c3c3c;font-family:'Noto Sans CJK JP','Liberation Sans',sans-serif;left:411.00px;transform:scaleX(0.995);">ご請求金額</span>
<div style="left:534px;top:445px;width:95px;height:32px;background:#ffffff;border:1px solid #d4d4d4;box-sizing:border-box;border-bottom:2px solid #8a8a8a;"></div>
<span class="t" style="top:446.64px;font-size:13.33px;color:#3c3c3c;font-weight:700;font-family:'Noto Sans CJK JP','Liberation Sans',sans-serif;transform-origin:100% 50%;left:539.09px;transform:scaleX(0.995);">mal(TaxRate)</span>
<span class="t" style="top:462.14px;font-size:13.33px;color:#3c3c3c;font-weight:700;font-family:'Noto Sans CJK JP','Liberation Sans',sans-serif;transform-origin:100% 50%;left:573.52px;transform:scaleX(0.981);">* Price)}</span>
<div style="left:738px;top:343px;width:175px;height:24px;background:#ffffff;border:1px solid #d4d4d4;box-sizing:border-box;"></div>
<span class="t" style="top:347.82px;font-size:10.67px;color:#3c3c3c;font-family:'Noto Sans CJK JP','Liberation Sans',sans-serif;transform-origin:100% 50%;left:808.20px;transform:scaleX(1.032);">請求書番号：{BillNo}</span>
<div style="left:685px;top:370px;width:220px;height:29px;background:#ffffff;border:1px solid #d4d4d4;box-sizing:border-box;"></div>
<span class="t" style="top:375.70px;font-size:17.33px;color:#3c3c3c;font-weight:700;font-family:'Noto Sans CJK JP','Liberation Sans',sans-serif;left:687.70px;transform:scaleX(1.021);">サンプルデータ株式会社</span>
<div style="left:686px;top:399px;width:183px;height:19px;background:#ffffff;border:1px solid #d4d4d4;box-sizing:border-box;"></div>
<span class="t" style="top:403.12px;font-size:10.67px;color:#3c3c3c;font-family:'Noto Sans CJK JP','Liberation Sans',sans-serif;left:690.00px;transform:scaleX(1.036);">登録番号：T1234567890123</span>
<div style="left:675px;top:419px;width:159px;height:55px;background:#ffffff;border:1px solid #d4d4d4;box-sizing:border-box;"></div>
<span class="t" style="top:423.62px;font-size:10.67px;color:#3c3c3c;font-family:'Noto Sans CJK JP','Liberation Sans',sans-serif;left:678.50px;transform:scaleX(1.031);">〒980-0021</span>
<span class="t" style="top:436.62px;font-size:10.67px;color:#3c3c3c;font-family:'Noto Sans CJK JP','Liberation Sans',sans-serif;left:678.50px;transform:scaleX(1.040);">宮城県仙台市青葉区中央9－99</span>
<span class="t" style="top:449.62px;font-size:10.67px;color:#3c3c3c;font-family:'Noto Sans CJK JP','Liberation Sans',sans-serif;left:678.50px;transform:scaleX(1.039);">－9仙台駅前ビル 15F</span>
<div style="left:675px;top:474px;width:159px;height:39px;background:#ffffff;border:1px solid #d4d4d4;box-sizing:border-box;"></div>
<span class="t" style="top:478.22px;font-size:10.67px;color:#3c3c3c;font-family:'Noto Sans CJK JP','Liberation Sans',sans-serif;left:678.50px;transform:scaleX(1.040);">TEL：022-999-1234</span>
<span class="t" style="top:491.42px;font-size:10.67px;color:#3c3c3c;font-family:'Noto Sans CJK JP','Liberation Sans',sans-serif;left:678.50px;transform:scaleX(1.044);">FAX：022-999-9876</span>
<svg style="left:834px;top:428px" width="77" height="77" viewBox="0 0 77 77"><rect x="1" y="1" width="75" height="75" rx="5" fill="#fff" stroke="#d42d1c" stroke-width="1"/><g font-family="Noto Sans CJK JP,sans-serif" font-weight="400" font-size="20" fill="#d42d1c" text-anchor="middle"><g transform="translate(63.5,11.5) scale(1.270,0.93)"><text y="7.200">サ</text></g><g transform="translate(63.5,29.5) scale(1.270,0.93)"><text y="7.200">ン</text></g><g transform="translate(63.5,47.5) scale(1.270,0.93)"><text y="7.200">プ</text></g><g transform="translate(63.5,65.5) scale(1.270,0.93)"><text y="7.200">ル</text></g><g transform="translate(38.5,11.5) scale(1.270,0.93)"><text y="7.200">デ</text></g><g transform="translate(38.5,29.5) scale(1.270,0.93) rotate(90)"><text y="7.200">ー</text></g><g transform="translate(38.5,47.5) scale(1.270,0.93)"><text y="7.200">タ</text></g><g transform="translate(38.5,65.5) scale(1.270,0.93)"><text y="7.200">株</text></g><g transform="translate(13.5,14.5) scale(1.270,1.26)"><text y="7.200">式</text></g><g transform="translate(13.5,38.5) scale(1.270,1.26)"><text y="7.200">会</text></g><g transform="translate(13.5,62.5) scale(1.270,1.26)"><text y="7.200">社</text></g></g></svg>
<div style="left:409px;top:525px;width:57px;height:22px;background:#68747f;border:1px solid #4f5860;box-sizing:border-box;"></div>
<span class="t" style="top:528.42px;font-size:10.67px;color:#ffffff;font-weight:700;font-family:'Noto Sans CJK JP','Liberation Sans',sans-serif;transform-origin:50% 50%;left:426.84px;">日付</span>
<div style="left:465px;top:525px;width:61px;height:22px;background:#68747f;border:1px solid #4f5860;box-sizing:border-box;"></div>
<span class="t" style="top:528.42px;font-size:10.67px;color:#ffffff;font-weight:700;font-family:'Noto Sans CJK JP','Liberation Sans',sans-serif;transform-origin:50% 50%;left:476.75px;">商品NO</span>
<div style="left:525px;top:525px;width:219px;height:22px;background:#68747f;border:1px solid #4f5860;box-sizing:border-box;"></div>
<span class="t" style="top:528.42px;font-size:10.67px;color:#ffffff;font-weight:700;font-family:'Noto Sans CJK JP','Liberation Sans',sans-serif;transform-origin:50% 50%;left:618.51px;">商品名</span>
<div style="left:743px;top:525px;width:53px;height:22px;background:#68747f;border:1px solid #4f5860;box-sizing:border-box;"></div>
<span class="t" style="top:528.42px;font-size:10.67px;color:#ffffff;font-weight:700;font-family:'Noto Sans CJK JP','Liberation Sans',sans-serif;transform-origin:50% 50%;left:758.84px;">単価</span>
<div style="left:795px;top:525px;width:53px;height:22px;background:#68747f;border:1px solid #4f5860;box-sizing:border-box;"></div>
<span class="t" style="top:528.42px;font-size:10.67px;color:#ffffff;font-weight:700;font-family:'Noto Sans CJK JP','Liberation Sans',sans-serif;transform-origin:50% 50%;left:810.84px;">数量</span>
<div style="left:847px;top:525px;width:66px;height:22px;background:#68747f;border:1px solid #4f5860;box-sizing:border-box;"></div>
<span class="t" style="top:528.42px;font-size:10.67px;color:#ffffff;font-weight:700;font-family:'Noto Sans CJK JP','Liberation Sans',sans-serif;transform-origin:50% 50%;left:869.34px;">金額</span>
<div style="left:409px;top:546px;width:57px;height:24px;background:#ffffff;border:1px solid #8e8e8e;box-sizing:border-box;"></div>
<div style="left:465px;top:546px;width:61px;height:24px;background:#ffffff;border:1px solid #8e8e8e;box-sizing:border-box;"></div>
<div style="left:525px;top:546px;width:202px;height:24px;background:#ffffff;border:1px solid #8e8e8e;box-sizing:border-box;border-right:0;width:201px;"></div>
<div style="left:726px;top:546px;width:18px;height:24px;background:#ffffff;border:1px solid #8e8e8e;box-sizing:border-box;border-left:0;"></div>
<div style="left:743px;top:546px;width:53px;height:24px;background:#ffffff;border:1px solid #8e8e8e;box-sizing:border-box;"></div>
<div style="left:795px;top:546px;width:53px;height:24px;background:#ffffff;border:1px solid #8e8e8e;box-sizing:border-box;"></div>
<div style="left:847px;top:546px;width:66px;height:24px;background:#ffffff;border:1px solid #8e8e8e;box-sizing:border-box;"></div>
<span class="t" style="top:551.98px;font-size:12px;color:#3c3c3c;font-family:'Noto Sans CJK JP','Liberation Sans',sans-serif;transform-origin:50% 50%;left:420.03px;transform:scaleX(0.928);">{Date}</span>
<span class="t" style="top:551.98px;font-size:12px;color:#3c3c3c;font-family:'Noto Sans CJK JP','Liberation Sans',sans-serif;transform-origin:50% 50%;left:472.31px;transform:scaleX(0.915);">{SlipNo}</span>
<span class="t" style="top:551.98px;font-size:12px;color:#3c3c3c;font-family:'Noto Sans CJK JP','Liberation Sans',sans-serif;left:527.50px;transform:scaleX(0.919);">{Products}</span>
<div style="left:726px;top:547px;width:17px;height:22px;overflow:hidden;">
<span class="t" style="top:4.98px;font-size:12px;color:#3c3c3c;font-family:'Noto Sans CJK JP','Liberation Sans',sans-serif;left:1.80px;">{IIF(</span>
</div>
<div style="left:744px;top:549px;width:51px;height:18.700px;overflow:hidden;">
<span class="t" style="top:-9.32px;font-size:12px;color:#3c3c3c;font-family:'Noto Sans CJK JP','Liberation Sans',sans-serif;transform-origin:100% 50%;left:7.05px;">{ToDeci</span>
<span class="t" style="top:3.03px;font-size:12px;color:#3c3c3c;font-family:'Noto Sans CJK JP','Liberation Sans',sans-serif;transform-origin:100% 50%;left:-0.14px;transform:scaleX(0.895);">mal(Unit</span>
<span class="t" style="top:15.18px;font-size:12px;color:#3c3c3c;font-family:'Noto Sans CJK JP','Liberation Sans',sans-serif;transform-origin:100% 50%;left:12.84px;">Price)}</span>
</div>
<div style="left:796px;top:549px;width:51px;height:18.700px;overflow:hidden;">
<span class="t" style="top:-4.42px;font-size:12px;color:#3c3c3c;font-family:'Noto Sans CJK JP','Liberation Sans',sans-serif;transform-origin:100% 50%;left:-0.86px;transform:scaleX(0.909);">{Number</span>
<span class="t" style="top:10.58px;font-size:12px;color:#3c3c3c;font-family:'Noto Sans CJK JP','Liberation Sans',sans-serif;transform-origin:100% 50%;left:44.94px;">}</span>
</div>
<span class="t" style="top:551.98px;font-size:12px;color:#3c3c3c;font-family:'Noto Sans CJK JP','Liberation Sans',sans-serif;transform-origin:100% 50%;left:873.64px;transform:scaleX(0.907);">{Price}</span>
<div style="left:409px;top:569px;width:144px;height:25px;background:#ffffff;border:1px solid #d4d4d4;box-sizing:border-box;"></div>
<span class="t" style="top:575.82px;font-size:10.67px;color:#3c3c3c;font-family:'Noto Sans CJK JP','Liberation Sans',sans-serif;left:411.00px;transform:scaleX(1.043);">※は軽減税率（8%）対象</span>
<div style="left:725px;top:569.5px;width:71px;height:25.5px;background:#68747f;border:1px solid #4f5860;box-sizing:border-box;"></div>
<span class="t" style="top:576.22px;font-size:10.67px;color:#ffffff;font-weight:700;font-family:'Noto Sans CJK JP','Liberation Sans',sans-serif;transform-origin:100% 50%;left:768.17px;transform:scaleX(1.022);">小計</span>
<div style="left:795px;top:569.5px;width:118px;height:25.5px;background:#ffffff;border:1px solid #666;box-sizing:border-box;"></div>
<span class="t" style="top:575.78px;font-size:12px;color:#3c3c3c;font-family:'Noto Sans CJK JP','Liberation Sans',sans-serif;transform-origin:100% 50%;left:839.99px;transform:scaleX(0.917);">{SUM(Price)}</span>
<div style="left:539px;top:602px;width:70px;height:26px;background:#68747f;border:1px solid #4f5860;box-sizing:border-box;"></div>
<span class="t" style="top:610.12px;font-size:10.67px;color:#ffffff;font-weight:700;font-family:'Noto Sans CJK JP','Liberation Sans',sans-serif;transform-origin:100% 50%;left:562.64px;transform:scaleX(0.991);">10%対象</span>
<div style="left:608px;top:602px;width:118px;height:26px;background:#ffffff;border:1px solid #666;box-sizing:border-box;"></div>
<div style="left:725px;top:602px;width:71px;height:26px;background:#68747f;border:1px solid #4f5860;box-sizing:border-box;"></div>
<span class="t" style="top:610.12px;font-size:10.67px;color:#ffffff;font-weight:700;font-family:'Noto Sans CJK JP','Liberation Sans',sans-serif;transform-origin:100% 50%;left:734.69px;">10%消費税</span>
<div style="left:795px;top:602px;width:118px;height:26px;background:#ffffff;border:1px solid #666;box-sizing:border-box;"></div>
<div style="left:539px;top:627px;width:70px;height:26px;background:#68747f;border:1px solid #4f5860;box-sizing:border-box;"></div>
<span class="t" style="top:635.12px;font-size:10.67px;color:#ffffff;font-weight:700;font-family:'Noto Sans CJK JP','Liberation Sans',sans-serif;transform-origin:100% 50%;left:568.92px;">8%対象</span>
<div style="left:608px;top:627px;width:118px;height:26px;background:#ffffff;border:1px solid #666;box-sizing:border-box;"></div>
<div style="left:725px;top:627px;width:71px;height:26px;background:#68747f;border:1px solid #4f5860;box-sizing:border-box;"></div>
<span class="t" style="top:635.12px;font-size:10.67px;color:#ffffff;font-weight:700;font-family:'Noto Sans CJK JP','Liberation Sans',sans-serif;transform-origin:100% 50%;left:740.97px;transform:scaleX(1.010);">8%消費税</span>
<div style="left:795px;top:627px;width:118px;height:26px;background:#ffffff;border:1px solid #666;box-sizing:border-box;"></div>
<div style="left:609px;top:604.600px;width:116px;height:20.900px;overflow:hidden;">
<span class="t" style="top:3.98px;font-size:12px;color:#3c3c3c;font-family:'Noto Sans CJK JP','Liberation Sans',sans-serif;transform-origin:100% 50%;left:12.57px;transform:scaleX(0.906);">(TaxRate = "0.08",</span>
<div style="left:10.5px;top:3.2px;width:1px;height:1.2px;background:#9a9a9a;"></div>
<div style="left:38px;top:3.2px;width:1px;height:1.2px;background:#9a9a9a;"></div>
<div style="left:97.5px;top:3.2px;width:1px;height:1.2px;background:#9a9a9a;"></div>
</div>
<div style="left:796px;top:604.600px;width:116px;height:20.900px;overflow:hidden;">
<span class="t" style="top:-8.32px;font-size:12px;color:#3c3c3c;font-family:'Noto Sans CJK JP','Liberation Sans',sans-serif;transform-origin:100% 50%;left:-4.00px;transform:scaleX(0.896);">{SUM(ToDecimal(IIF (</span>
<span class="t" style="top:3.48px;font-size:12px;color:#3c3c3c;font-family:'Noto Sans CJK JP','Liberation Sans',sans-serif;transform-origin:100% 50%;left:-4.97px;transform:scaleX(0.884);">TaxRate = "0.08", "0",</span>
<span class="t" style="top:16.98px;font-size:12px;color:#3c3c3c;font-family:'Noto Sans CJK JP','Liberation Sans',sans-serif;transform-origin:100% 50%;left:13.47px;transform:scaleX(0.899);">TaxRate)) * Price))</span>
</div>
<div style="left:609px;top:629.500px;width:116px;height:8px;overflow:hidden;">
<span class="t" style="top:3.78px;font-size:12px;color:#3c3c3c;font-family:'Noto Sans CJK JP','Liberation Sans',sans-serif;transform-origin:100% 50%;left:12.57px;transform:scaleX(0.906);">(TaxRate = "0.08",</span>
<div style="left:10.5px;top:3.2px;width:1px;height:1.2px;background:#9a9a9a;"></div>
<div style="left:38px;top:3.2px;width:1px;height:1.2px;background:#9a9a9a;"></div>
<div style="left:97.5px;top:3.2px;width:1px;height:1.2px;background:#9a9a9a;"></div>
</div>
<div style="left:796px;top:629.500px;width:116px;height:8px;overflow:hidden;">
<span class="t" style="top:-3.72px;font-size:12px;color:#3c3c3c;font-family:'Noto Sans CJK JP','Liberation Sans',sans-serif;transform-origin:100% 50%;left:18.11px;transform:scaleX(0.867);">TaxRate = "0.08",</span>
</div>
</div>
<div style="left:1013px;top:125px;width:251px;height:552px;background:#f1f1f1;"></div>
<div style="left:1013px;top:124px;width:251px;height:1px;background:#dddddd;"></div>
<svg style="left:1025px;top:96px" width="17.500" height="17.500" viewBox="0 0 24 24" fill="none" stroke="#225e77" stroke-width="2.200" stroke-linejoin="round"><circle cx="12" cy="12" r="3.300"/><path d="M10.300 2.500h3.400l.5 2.600 1.700.7 2.200-1.500 2.400 2.400-1.500 2.200.7 1.700 2.600.5v3.400l-2.600.5-.7 1.700 1.500 2.200-2.400 2.400-2.200-1.500-1.700.7-.5 2.600h-3.400l-.5-2.600-1.700-.7-2.200 1.500-2.400-2.400 1.500-2.200-.7-1.700-2.600-.5v-3.400l2.600-.5.7-1.700-1.500-2.200 2.400-2.400 2.200 1.500 1.700-.7z"/></svg>
<span class="t" style="top:98.50px;font-size:12px;color:#3a7088;left:1055.00px;transform:scaleX(0.835);">プロパティ</span>
<div style="left:1019.5px;top:123px;width:91.5px;height:2px;background:#225e77;"></div>
<svg style="left:1131px;top:96px" width="16" height="17" viewBox="0 0 16 17" fill="#222"><ellipse cx="8" cy="3.500" rx="7" ry="3"/><path d="M1 5.500c0 1.700 3 3 7 3s7-1.300 7-3v2.500c0 1.700-3 3-7 3s-7-1.300-7-3z"/><path d="M1 10c0 1.700 3 3 7 3s7-1.300 7-3v2.500c0 1.700-3 3-7 3s-7-1.300-7-3z"/></svg>
<svg style="left:1234px;top:97px" width="17" height="15" viewBox="0 0 17 15" fill="none" stroke="#222" stroke-width="1.200" stroke-linejoin="round"><rect x="0.800" y="0.800" width="15.400" height="13.400" rx="2"/><path d="M11.500 0.800v13.400"/><path d="M3.500 7.500h5M6.500 5l2.500 2.500L6.500 10" stroke="#225e77" stroke-width="1.300"/></svg>
<div style="left:1026px;top:138px;width:225px;height:25px;background:#225e77;border-radius:3px;"></div>
<span class="t" style="top:144.50px;font-size:12px;color:#ffffff;transform-origin:50% 50%;left:1107.62px;transform:scaleX(0.867);">ページ</span>
<svg style="left:1207px;top:145px" width="11" height="11" viewBox="0 0 11 11" fill="none" stroke="#7fa6b6" stroke-width="1.100"><circle cx="4.500" cy="4.500" r="3.300"/><path d="M7 7l3.300 3.300"/></svg>
<svg style="left:1237px;top:145px" width="3" height="11" viewBox="0 0 3 11" fill="#7fa6b6"><circle cx="1.500" cy="1.500" r="0.900"/><circle cx="1.500" cy="5.500" r="0.900"/><circle cx="1.500" cy="9.500" r="0.900"/></svg>
<span class="t" style="top:178.75px;font-size:10.5px;color:#23617a;font-weight:700;left:1026.40px;transform:scaleX(0.914);">背景</span>
<div style="left:1053.6000000000001px;top:183.5px;width:164.39999999999986px;height:1px;background:#d6e2e6;"></div>
<svg style="left:1234px;top:180.5px" width="10" height="7" viewBox="0 0 10 7" fill="none" stroke="#225e77" stroke-width="1.200"><path d="M1.500 5.500 5 2l3.500 3.500"/></svg>
<span class="t" style="top:207.80px;font-size:11px;color:#555555;left:1026.40px;transform:scaleX(0.879);">背景色</span>
<div style="left:1100px;top:200.60000000000002px;width:126px;height:24.7px;background:#e6e6e6;border-radius:3px;"></div>
<div style="left:1104.5px;top:205.3px;width:16.5px;height:16.5px;background:#e9e9e9;border-radius:3px;border:1px solid #d8d8d8;box-sizing:border-box;"></div>
<span class="t" style="top:208.05px;font-size:10.5px;color:#444444;left:1126.00px;transform:scaleX(0.916);">Transparent</span>
<svg style="left:1208.3px;top:210.0px" width="10" height="7" viewBox="0 0 10 7" fill="none" stroke="#333" stroke-width="1.200"><path d="M1.500 1.500 5 5l3.500-3.500"/></svg>
<svg style="left:1234px;top:208.8px" width="9" height="9" viewBox="0 0 9 9"><circle cx="4.500" cy="4.500" r="4" fill="#8a8a8a"/></svg>
<span class="t" style="top:236.90px;font-size:11px;color:#555555;left:1026.40px;transform:scaleX(0.886);">画像</span>
<div style="left:1100px;top:229.70000000000002px;width:126px;height:24.7px;background:#e6e6e6;border-radius:3px;"></div>
<svg style="left:1208.3px;top:239.0px" width="10" height="7" viewBox="0 0 10 7" fill="none" stroke="#333" stroke-width="1.200"><path d="M1.500 1.500 5 5l3.500-3.500"/></svg>
<div style="left:1226px;top:229.70000000000002px;width:25px;height:24.7px;background:#e6e6e6;border-radius:3px;"></div>
<div style="left:1225.6px;top:229.70000000000002px;width:0.8px;height:24.7px;background:#eeeeee;"></div>
<svg style="left:1232.500px;top:236.4px" width="12" height="12" viewBox="0 0 12 12" fill="none" stroke="#3a3a3a" stroke-width="1.050"><path d="M0.600 4.600v-4h4M0.600 0.600l3.900 3.900M7.400 0.600h4v4M11.400 0.600 7.500 4.500M11.400 7.400v4h-4M11.400 11.400 7.500 7.500M4.600 11.400h-4v-4M0.600 11.400 4.500 7.500"/></svg>
<span class="t" style="top:270.25px;font-size:10.5px;color:#23617a;font-weight:700;left:1026.40px;transform:scaleX(0.914);">罫線</span>
<div style="left:1053.6000000000001px;top:275.0px;width:164.39999999999986px;height:1px;background:#d6e2e6;"></div>
<svg style="left:1234px;top:272.0px" width="10" height="7" viewBox="0 0 10 7" fill="none" stroke="#225e77" stroke-width="1.200"><path d="M1.500 5.500 5 2l3.500 3.500"/></svg>
<span class="t" style="top:299.20px;font-size:11px;color:#555555;left:1026.40px;transform:scaleX(0.886);">太さ</span>
<div style="left:1100px;top:292.0px;width:151px;height:24.7px;background:#e6e6e6;border-radius:3px;"></div>
<span class="t" style="top:299.75px;font-size:10.5px;color:#444444;left:1109.50px;transform:scaleX(0.993);">1pt</span>
<div style="left:1226px;top:292.0px;width:25px;height:24.7px;background:#e6e6e6;border-radius:3px;"></div>
<svg style="left:1232.500px;top:298.7px" width="12" height="12" viewBox="0 0 12 12" fill="none" stroke="#3a3a3a" stroke-width="1.050"><path d="M0.600 4.600v-4h4M0.600 0.600l3.900 3.900M7.400 0.600h4v4M11.400 0.600 7.500 4.500M11.400 7.400v4h-4M11.400 11.400 7.500 7.500M4.600 11.400h-4v-4M0.600 11.400 4.500 7.500"/></svg>
<span class="t" style="top:328.50px;font-size:11px;color:#555555;left:1026.40px;transform:scaleX(0.875);">スタイル</span>
<div style="left:1100px;top:321.3px;width:126px;height:24.7px;background:#e6e6e6;border-radius:3px;"></div>
<div style="left:1104.5px;top:326px;width:16.5px;height:16.5px;background:#e9e9e9;border-radius:3px;border:1px solid #d8d8d8;box-sizing:border-box;"></div>
<span class="t" style="top:328.95px;font-size:10.5px;color:#444444;left:1126.00px;transform:scaleX(0.956);">None</span>
<svg style="left:1208.3px;top:330.7px" width="10" height="7" viewBox="0 0 10 7" fill="none" stroke="#333" stroke-width="1.200"><path d="M1.500 1.500 5 5l3.500-3.500"/></svg>
<div style="left:1226px;top:321.3px;width:25px;height:24.7px;background:#e6e6e6;border-radius:3px;"></div>
<div style="left:1225.6px;top:321.3px;width:0.8px;height:24.7px;background:#eeeeee;"></div>
<svg style="left:1232.500px;top:328px" width="12" height="12" viewBox="0 0 12 12" fill="none" stroke="#3a3a3a" stroke-width="1.050"><path d="M0.600 4.600v-4h4M0.600 0.600l3.900 3.900M7.400 0.600h4v4M11.400 0.600 7.500 4.500M11.400 7.400v4h-4M11.400 11.400 7.500 7.500M4.600 11.400h-4v-4M0.600 11.400 4.500 7.500"/></svg>
<span class="t" style="top:357.70px;font-size:11px;color:#555555;left:1026.40px;transform:scaleX(0.864);">色</span>
<div style="left:1100px;top:350.5px;width:126px;height:24.7px;background:#e6e6e6;border-radius:3px;"></div>
<div style="left:1104.5px;top:355.2px;width:16.5px;height:16.5px;background:#000000;border-radius:3px;border:1px solid #000;box-sizing:border-box;"></div>
<span class="t" style="top:358.15px;font-size:10.5px;color:#444444;left:1126.00px;transform:scaleX(0.895);">Black</span>
<svg style="left:1208.3px;top:359.9px" width="10" height="7" viewBox="0 0 10 7" fill="none" stroke="#333" stroke-width="1.200"><path d="M1.500 1.500 5 5l3.500-3.500"/></svg>
<div style="left:1226px;top:350.5px;width:25px;height:24.7px;background:#e6e6e6;border-radius:3px;"></div>
<div style="left:1225.6px;top:350.5px;width:0.8px;height:24.7px;background:#eeeeee;"></div>
<svg style="left:1232.500px;top:357.2px" width="12" height="12" viewBox="0 0 12 12" fill="none" stroke="#3a3a3a" stroke-width="1.050"><path d="M0.600 4.600v-4h4M0.600 0.600l3.900 3.900M7.400 0.600h4v4M11.400 0.600 7.500 4.500M11.400 7.400v4h-4M11.400 11.400 7.500 7.500M4.600 11.400h-4v-4M0.600 11.400 4.500 7.500"/></svg>
<span class="t" style="top:390.75px;font-size:10.5px;color:#23617a;font-weight:700;left:1026.40px;transform:scaleX(0.937);">データ</span>
<div style="left:1063.9px;top:395.5px;width:154.0999999999999px;height:1px;background:#d6e2e6;"></div>
<svg style="left:1234px;top:392.5px" width="10" height="7" viewBox="0 0 10 7" fill="none" stroke="#225e77" stroke-width="1.200"><path d="M1.500 5.500 5 2l3.500 3.500"/></svg>
<span class="t" style="top:413.70px;font-size:11px;color:#555555;left:1026.40px;transform:scaleX(0.917);">空のプレース</span>
<span class="t" style="top:426.10px;font-size:11px;color:#555555;left:1026.40px;transform:scaleX(0.904);">ホルダを表...</span>
<span class="t" style="top:419.80px;font-size:11px;color:#555555;left:1175.80px;transform:scaleX(0.879);">いいえ</span>
<div style="left:1218px;top:417px;width:33px;height:17px;background:#e6e6e6;border-radius:8.500px;"></div>
<svg style="left:1221px;top:421px" width="9" height="9" viewBox="0 0 9 9"><circle cx="4.500" cy="4.500" r="4.200" fill="#333"/></svg>
<span class="t" style="top:453.55px;font-size:10.5px;color:#23617a;font-weight:700;left:1026.40px;transform:scaleX(0.914);">表示</span>
<div style="left:1053.6000000000001px;top:458.3px;width:164.39999999999986px;height:1px;background:#d6e2e6;"></div>
<svg style="left:1234px;top:455.3px" width="10" height="7" viewBox="0 0 10 7" fill="none" stroke="#225e77" stroke-width="1.200"><path d="M1.500 5.500 5 2l3.500 3.500"/></svg>
<span class="t" style="top:482.30px;font-size:11px;color:#555555;left:1026.40px;transform:scaleX(0.894);">非表示</span>
<span class="t" style="top:482.30px;font-size:11px;color:#555555;left:1150.70px;transform:scaleX(0.879);">いいえ</span>
<div style="left:1192.7px;top:479.3px;width:33.3px;height:17px;background:#e6e6e6;border-radius:8.500px;"></div>
<svg style="left:1196px;top:483.300px" width="9" height="9" viewBox="0 0 9 9"><circle cx="4.500" cy="4.500" r="4.200" fill="#333"/></svg>
<svg style="left:1234px;top:483.3px" width="9" height="9" viewBox="0 0 9 9"><circle cx="4.500" cy="4.500" r="4" fill="#8a8a8a"/></svg>
<span class="t" style="top:515.55px;font-size:10.5px;color:#23617a;font-weight:700;left:1026.40px;transform:scaleX(0.949);">位置とサイズ</span>
<div style="left:1093.9px;top:520.3px;width:124.09999999999991px;height:1px;background:#d6e2e6;"></div>
<svg style="left:1234px;top:517.3px" width="10" height="7" viewBox="0 0 10 7" fill="none" stroke="#225e77" stroke-width="1.200"><path d="M1.500 5.500 5 2l3.500 3.500"/></svg>
<span class="t" style="top:544.90px;font-size:11px;color:#555555;left:1026.40px;transform:scaleX(0.903);">サイズ</span>
<div style="left:1100px;top:537.6999999999999px;width:151px;height:24.7px;background:#e6e6e6;border-radius:3px;"></div>
<span class="t" style="top:545.35px;font-size:10.5px;color:#444444;left:1109.50px;transform:scaleX(0.895);">A4</span>
<svg style="left:1233.6px;top:547.1px" width="10" height="7" viewBox="0 0 10 7" fill="none" stroke="#333" stroke-width="1.200"><path d="M1.500 1.500 5 5l3.500-3.500"/></svg>
<span class="t" style="top:574.50px;font-size:11px;color:#555555;left:1026.40px;transform:scaleX(0.891);">印刷の方向</span>
<div style="left:1100px;top:567.3px;width:151px;height:24.7px;background:#e6e6e6;border-radius:3px;"></div>
<span class="t" style="top:574.75px;font-size:10.5px;color:#444444;left:1109.50px;transform:scaleX(0.905);">縦</span>
<svg style="left:1233.6px;top:576.5px" width="10" height="7" viewBox="0 0 10 7" fill="none" stroke="#333" stroke-width="1.200"><path d="M1.500 1.500 5 5l3.500-3.500"/></svg>
<span class="t" style="top:603.50px;font-size:11px;color:#555555;left:1026.40px;transform:scaleX(0.864);">幅</span>
<div style="left:1100px;top:596.3px;width:151px;height:24.7px;background:#e6e6e6;border-radius:3px;"></div>
<span class="t" style="top:603.95px;font-size:10.5px;color:#444444;left:1109.50px;transform:scaleX(0.915);">21cm</span>
<span class="t" style="top:632.50px;font-size:11px;color:#555555;left:1026.40px;transform:scaleX(0.886);">高さ</span>
<div style="left:1100px;top:625.3px;width:151px;height:24.7px;background:#e6e6e6;border-radius:3px;"></div>
<span class="t" style="top:632.95px;font-size:10.5px;color:#444444;left:1109.50px;transform:scaleX(0.915);">29.7cm</span>
<span class="t" style="top:665.75px;font-size:10.5px;color:#23617a;font-weight:700;left:1026.40px;transform:scaleX(0.914);">余白</span>
<div style="left:1053.6000000000001px;top:670.5px;width:164.39999999999986px;height:1px;background:#d6e2e6;"></div>
<svg style="left:1234px;top:667.5px" width="10" height="7" viewBox="0 0 10 7" fill="none" stroke="#225e77" stroke-width="1.200"><path d="M1.500 5.500 5 2l3.500 3.500"/></svg>
<svg style="left:0;top:0" width="1280" height="720" viewBox="0 0 1280 720" fill="none" stroke="#ffff00" stroke-width="4.200"><path d="M220.900 57H299" stroke-dasharray="4.200 3.850"/><path d="M308 30H474" stroke-dasharray="4.100 3.900"/><path d="M480 57H1269.200" stroke-dasharray="4.100 3.911"/><path d="M1267 55V707" stroke-dasharray="4.100 3.900"/><path d="M225 705H1269" stroke-dasharray="4.100 3.900"/><path d="M221 60.900V699" stroke-dasharray="4.100 3.900"/><path d="M58 185H208V207H58Z" stroke-width="4" stroke-dasharray="4 4" stroke-dashoffset="6"/><rect x="300" y="28" width="4.3" height="4.3" fill="#ffff00" stroke="none"/><rect x="300" y="36.9" width="4" height="4.1" fill="#ffff00" stroke="none"/><rect x="300" y="45.4" width="4" height="4.1" fill="#ffff00" stroke="none"/><rect x="300" y="54.8" width="4.5" height="4.2" fill="#ffff00" stroke="none"/><rect x="475" y="28" width="4.3" height="4.3" fill="#ffff00" stroke="none"/><rect x="475" y="37.2" width="4" height="4.3" fill="#ffff00" stroke="none"/><rect x="475" y="46" width="4" height="4" fill="#ffff00" stroke="none"/><rect x="475" y="54.5" width="4.3" height="4.5" fill="#ffff00" stroke="none"/><rect x="219" y="700.9" width="4" height="6.1" fill="#ffff00" stroke="none"/></svg>
<svg style="left:0;top:0" width="330" height="200" viewBox="0 0 330 200" fill="none"><path d="M132.200 186C137.600 108.400 209 37.800 284 31.100" stroke="#ff0" stroke-width="6.600"/><path d="M282.500 22.500 300 30 283 39.600z" fill="#ff0"/></svg>
</div></body></html>
